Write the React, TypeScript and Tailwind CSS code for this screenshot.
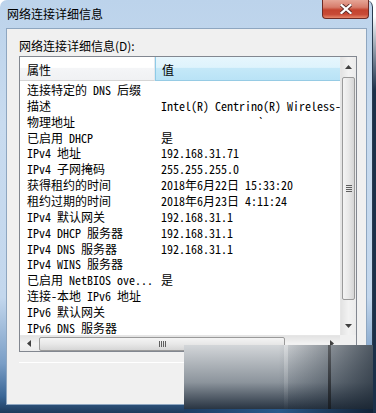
import type { ReactNode } from "react";

const rows: [string, ReactNode][] = [
  ["连接特定的 DNS 后缀", ""],
  ["描述", "Intel(R) Centrino(R) Wireless-N 1030"],
  ["物理地址", <span className="ml-[97px]">`</span>],
  ["已启用 DHCP", "是"],
  ["IPv4 地址", "192.168.31.71"],
  ["IPv4 子网掩码", "255.255.255.0"],
  ["获得租约的时间", "2018年6月22日 15:33:20"],
  ["租约过期的时间", "2018年6月23日 4:11:24"],
  ["IPv4 默认网关", "192.168.31.1"],
  ["IPv4 DHCP 服务器", "192.168.31.1"],
  ["IPv4 DNS 服务器", "192.168.31.1"],
  ["IPv4 WINS 服务器", ""],
  ["已启用 NetBIOS ove...", "是"],
  ["连接-本地 IPv6 地址", ""],
  ["IPv6 默认网关", ""],
  ["IPv6 DNS 服务器", ""],
];

function Arrow({ dir }: { dir: "up" | "down" | "left" | "right" }) {
  const pts = {
    up: "0,4 7,4 3.5,0",
    down: "0,0 7,0 3.5,4",
    left: "4,0 4,7 0,3.5",
    right: "0,0 0,7 4,3.5",
  }[dir];
  const vertical = dir === "up" || dir === "down";
  return (
    <svg width={vertical ? 7 : 4} height={vertical ? 4 : 7} viewBox={vertical ? "0 0 7 4" : "0 0 4 7"}>
      <polygon points={pts} fill="#404040" />
    </svg>
  );
}

function VScrollbar() {
  return (
    <div className="w-[16px] h-full flex flex-col bg-linear-to-r from-[#e3e3e3] via-[#f2f2f2] to-[#ebebeb] border-l border-[#e6e6e6]">
      <div className="h-[17px] flex items-center justify-center pt-[2px]">
        <Arrow dir="up" />
      </div>
      <div className="mt-[3px] h-[223px] mx-[1px] rounded-[2px] border border-[#9a9a9a] bg-linear-to-r from-[#f4f4f4] via-[#e8e8e8] to-[#d6d6d6] flex flex-col items-center justify-center gap-[1px]">
        <div className="w-[6px] h-px bg-[#5f5f5f]" />
        <div className="w-[6px] h-px bg-[#5f5f5f]" />
        <div className="w-[6px] h-px bg-[#5f5f5f]" />
        <div className="w-[6px] h-px bg-[#5f5f5f]" />
      </div>
      <div className="flex-1" />
      <div className="h-[17px] flex items-center justify-center pb-[2px]">
        <Arrow dir="down" />
      </div>
    </div>
  );
}

function HScrollbar() {
  return (
    <div className="h-[16px] w-full flex items-center bg-linear-to-b from-[#e3e3e3] via-[#f2f2f2] to-[#ebebeb] border-t border-[#e6e6e6]">
      <div className="w-[17px] h-full flex items-center justify-center">
        <Arrow dir="left" />
      </div>
      <div className="ml-[2px] w-[246px] h-[14px] rounded-[2px] border border-[#9a9a9a] bg-linear-to-b from-[#f4f4f4] via-[#e8e8e8] to-[#d6d6d6] flex items-center justify-center gap-[1px]">
        <div className="h-[6px] w-px bg-[#5f5f5f]" />
        <div className="h-[6px] w-px bg-[#5f5f5f]" />
        <div className="h-[6px] w-px bg-[#5f5f5f]" />
        <div className="h-[6px] w-px bg-[#5f5f5f]" />
      </div>
      <div className="flex-1" />
      <div className="w-[17px] h-full flex items-center justify-center">
        <Arrow dir="right" />
      </div>
    </div>
  );
}

export default function App() {
  return (
    <div className="relative w-[376px] h-[413px] overflow-hidden bg-linear-to-b from-white from-[4%] to-[#1b3049] to-[22%] font-['Noto_Sans_CJK_SC',sans-serif] text-[12px] text-black">
      {/* window frame */}
      <div className="w-[373px] h-[413px] rounded-t-[7px] border-r border-[#2a3b4f] bg-[linear-gradient(to_bottom,#bcd3eb_0%,#c8dbef_30%,#c3d7ed_72%,#7a9ec6_88%,#3a6696_96%,#1d3a5c_100%)] pl-[6px] pr-[5px] pb-[8px] flex flex-col">
        {/* title bar */}
        <div className="h-[28px] flex justify-between items-start">
          <div className="pl-[1px] pt-[5px] leading-[18px]">网络连接详细信息</div>
          <div className="mr-[-2px] w-[47px] h-[19px] rounded-b-[4px] border border-t-0 border-[#6e2b25] bg-[linear-gradient(to_bottom,#e6a596_0%,#d77d6c_40%,#c4432f_55%,#c84a36_80%,#e6866a_100%)] flex items-center justify-center">
            <svg width="12" height="10" viewBox="0 0 12 10">
              <path d="M1.5 1 L10.5 9 M10.5 1 L1.5 9" stroke="#5a2a26" strokeWidth="4" strokeLinecap="square" />
              <path d="M1.5 1 L10.5 9 M10.5 1 L1.5 9" stroke="#ffffff" strokeWidth="2.2" strokeLinecap="square" />
            </svg>
          </div>
        </div>

        {/* client area */}
        <div className="flex-1 border border-[#8ea6c0] bg-[#f0f0f0] pl-[12px] flex flex-col">
          <div className="mt-[9px] h-[16px] leading-[16px]">网络连接详细信息(D):</div>

          <div className="mt-[2px] w-[338px] h-[296px] border border-[#828790] bg-white grid grid-cols-[320px_16px] grid-rows-[278px_16px]">
            <div className="flex flex-col overflow-hidden">
              {/* header */}
              <div className="h-[24px] shrink-0 flex">
                <div className="w-[135px] pl-[7px] pt-[5px] leading-[16px] border-r border-[#e3e8ee] border-b border-b-[#d5d5d5] bg-[linear-gradient(to_bottom,#ffffff_0%,#ffffff_45%,#f4f5f7_50%,#f0f1f3_100%)]">
                  属性
                </div>
                <div className="flex-1 pl-[6px] pt-[5px] leading-[16px] border-l border-[#8ecbe7] border-b border-b-[#96cbe4] bg-[linear-gradient(to_bottom,#e6f6fd_0%,#def3fc_45%,#c4e8f8_50%,#b9e3f6_100%)]">
                  值
                </div>
              </div>
              {/* rows */}
              <div className="pt-[1px] font-['Noto_Sans_Mono_CJK_SC','Noto_Sans_CJK_SC',monospace]">
                {rows.map(([k, v], i) => (
                  <div key={i} className="h-[15.87px] leading-[15.87px] flex whitespace-nowrap">
                    <div className="w-[135px] shrink-0 pl-[7px] overflow-hidden">{k}</div>
                    <div className="pl-[6px]">{v}</div>
                  </div>
                ))}
              </div>
            </div>
            <VScrollbar />
            <HScrollbar />
            <div className="bg-[#f0f0f0]" />
          </div>

          <div className="mt-[10px] w-[338px] h-px bg-[#a0a0a0] border-b border-white" />
        </div>
      </div>

      {/* blurred overlay at the bottom right */}
      <div className="absolute left-[184px] top-[345px] w-[189px] h-[68px] bg-linear-to-b from-[#d3d6d9] via-[#8c949c] via-[55%] to-[#1c2836]">
        <div className="absolute inset-0 bg-linear-to-r from-transparent via-transparent via-[50%] to-[#16222f]/70" />
        <div className="absolute left-[100px] top-0 w-[4px] h-full bg-linear-to-b from-white/30 to-transparent" />
        <div className="absolute left-[144px] top-0 w-[3px] h-full bg-linear-to-b from-[#5c5f63] to-[#151a20]" />
        <div className="absolute left-0 bottom-0 w-full h-[4px] bg-linear-to-r from-[#1d3d63] via-[#2a5a8c] to-[#122338]" />
      </div>
    </div>
  );
}
